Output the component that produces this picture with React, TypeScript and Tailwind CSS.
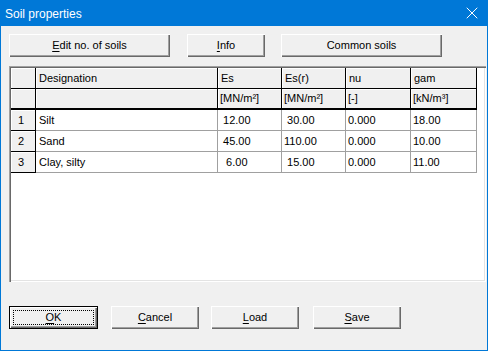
import { X } from "lucide-react"

const bevel =
    "shadow-[inset_1px_1px_0_#ffffff,inset_-1px_-1px_0_#696969,inset_-2px_-2px_0_#a0a0a0]"

function Button({ label, mnemonic, width, isDefault }: { label: string; mnemonic?: number; width: string; isDefault?: boolean }) {
    const text =
        mnemonic === undefined ? (
            label
        ) : (
            <>
                {label.slice(0, mnemonic)}
                <span className="underline underline-offset-[2px]">{label[mnemonic]}</span>
                {label.slice(mnemonic + 1)}
            </>
        )
    return (
        <div
            className={`relative h-[23px] ${width} bg-[#f0f0f0] flex items-center justify-center text-black ${
                isDefault
                    ? "shadow-[inset_0_0_0_1px_#000000,inset_2px_2px_0_#ffffff,inset_-2px_-2px_0_#696969,inset_-3px_-3px_0_#a0a0a0]"
                    : bevel
            }`}
        >
            {text}
            {isDefault && <div className="absolute left-[4px] right-[4px] top-[4px] bottom-[4px] border border-dotted border-black" />}
        </div>
    )
}

const headers = ["Designation", "Es", "Es(r)", "nu", "gam"]
const units = ["", "[MN/m²]", "[MN/m²]", "[-]", "[kN/m³]"]
const rows = [
    ["Silt", " 12.00", " 30.00", "0.000", "18.00"],
    ["Sand", " 45.00", "110.00", "0.000", "10.00"],
    ["Clay, silty", "  6.00", " 15.00", "0.000", "11.00"],
]

const headCell = "h-[21px] bg-[#f0f0f0] border-r border-b border-black shadow-[inset_1px_1px_0_#ffffff] flex items-center whitespace-pre"
const dataCell = "h-[21px] bg-white border-r border-b border-[#a0a0a0] flex items-center whitespace-pre"

export default function App() {
    return (
        <div
            className="w-[488px] h-[351px] flex flex-col bg-[#f0f0f0] border-l border-r border-b border-[#0078d7] text-[11px] leading-none text-black"
            style={{ fontFamily: '"Liberation Sans", Arial, sans-serif' }}
        >
            {/* Title bar */}
            <div className="h-[26px] -ml-px -mr-px bg-[#0078d7] flex items-center justify-between pl-[5px] pr-[6px] text-white text-[12px]">
                <span className="pt-px">Soil properties</span>
                <X className="w-[20px] h-[20px]" strokeWidth={1.2} />
            </div>

            {/* Top buttons */}
            <div className="flex mt-[8px] ml-[8px]">
                <Button label="Edit no. of soils" mnemonic={0} width="w-[161px]" />
                <div className="ml-[17px]">
                    <Button label="Info" mnemonic={0} width="w-[78px]" />
                </div>
                <div className="ml-[16px]">
                    <Button label="Common soils" width="w-[161px]" />
                </div>
            </div>

            {/* Table */}
            <div className="mt-[9px] ml-[8px] w-[477px] h-[216px] bg-white shadow-[inset_1px_1px_0_#a0a0a0,inset_2px_2px_0_#696969,inset_-1px_-1px_0_#ffffff,inset_-2px_-2px_0_#e3e3e3] p-[2px]">
                <div className="grid grid-cols-[25px_182px_64px_64px_65px_66px]">
                    <div className={headCell} />
                    {headers.map((h) => (
                        <div key={h} className={`${headCell} pl-[3px]`}>
                            {h}
                        </div>
                    ))}
                    <div className={`${headCell} border-b-2`} />
                    {units.map((u, i) => (
                        <div key={i} className={`${headCell} border-b-2 pl-[2px]`}>
                            {u}
                        </div>
                    ))}
                    {rows.map((r, i) => (
                        <>
                            <div key={`n${i}`} className={`${headCell} pl-[7px]`}>
                                {i + 1}
                            </div>
                            {r.map((v, j) => (
                                <div key={`${i}-${j}`} className={`${dataCell} ${j === 0 ? "pl-[3px]" : "pl-[2px]"}`}>
                                    {v}
                                </div>
                            ))}
                        </>
                    ))}
                </div>
            </div>

            {/* Bottom buttons */}
            <div className="flex mt-[24px] ml-[8px]">
                <Button label="OK" mnemonic={0} width="w-[89px]" isDefault />
                <div className="ml-[13px]">
                    <Button label="Cancel" mnemonic={0} width="w-[88px]" />
                </div>
                <div className="ml-[12px]">
                    <Button label="Load" mnemonic={0} width="w-[88px]" />
                </div>
                <div className="ml-[14px]">
                    <Button label="Save" mnemonic={0} width="w-[88px]" />
                </div>
            </div>
        </div>
    )
}
